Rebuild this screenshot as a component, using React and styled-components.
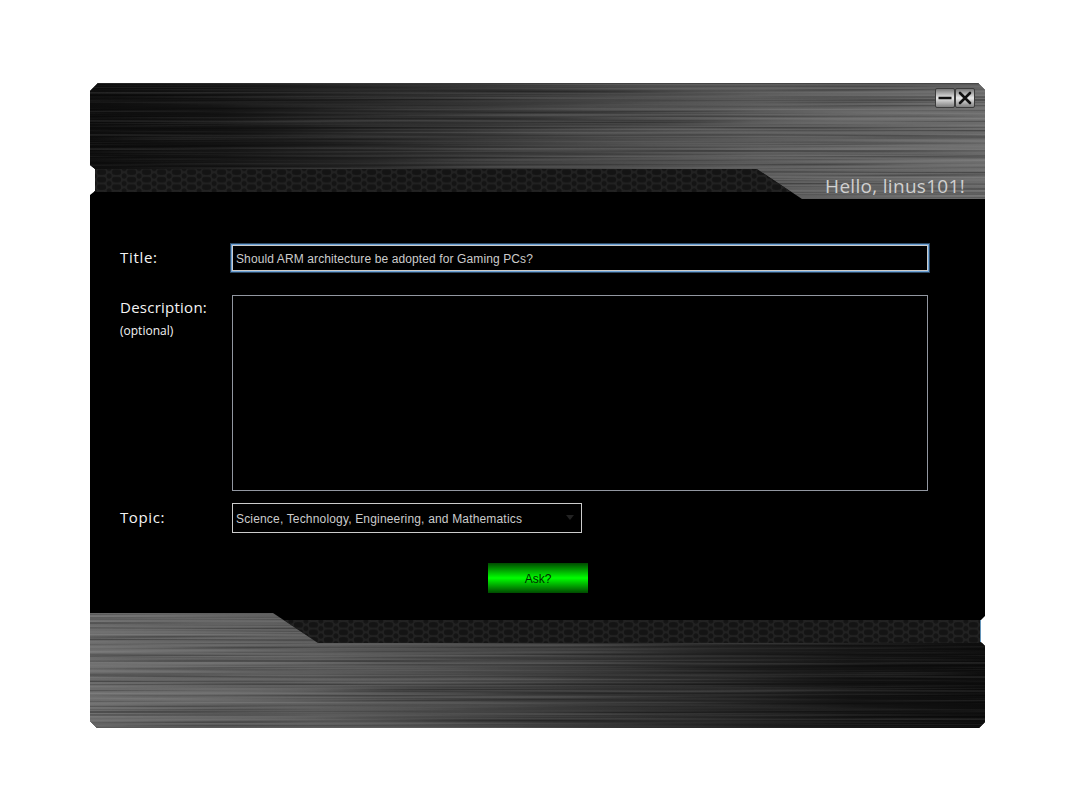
import React from "react";
import styled, { createGlobalStyle } from "styled-components";

const Global = createGlobalStyle`
  * { box-sizing: border-box; }
  body { margin: 0; background: #fff; }
`;

const Page = styled.main`
  width: 1080px;
  height: 810px;
  padding: 83px 95px 0 90px;
  overflow: hidden;
`;

const Window = styled.section`
  width: 895px;
  height: 645px;
  display: grid;
  grid-template-rows: 116px 414px 115px;
  background: #000;
  clip-path: polygon(8px 0, 888px 0, 895px 7px, 895px 533px, 891px 537px, 891px 559px, 895px 563px, 895px 639px, 889px 645px, 7px 645px, 0 638px, 0 112px, 5px 108px, 5px 86px, 0 82px, 0 8px);
`;

const Band = styled.div`
  display: grid;
  min-height: 0;
  & > * { grid-area: 1 / 1; }
`;

const Plate = styled.svg`
  display: block;
  width: 895px;
  height: 116px;
  transform: ${(p) => (p.$flip ? "rotate(180deg)" : "none")};
`;

const HeaderContent = styled.header`
  z-index: 1;
  display: flex;
  flex-direction: column;
  justify-content: space-between;
  align-items: flex-end;
  padding: 5px 10px 0 0;
`;

const Controls = styled.div`
  display: flex;
`;

const ControlButton = styled.button`
  width: 20px;
  height: 20px;
  padding: 0;
  border: 1px solid #3c3c3c;
  border-radius: 2px;
  background: linear-gradient(#777, #e8e8e8 50%, #808080);
  svg { display: block; }
`;

const Greeting = styled.div`
  margin-right: 10px;
  font: 19px/26px "Open Sans", sans-serif;
  letter-spacing: 0.3px;
  color: #d0d0d0;
`;

const Form = styled.form`
  display: grid;
  grid-template-columns: 111px 698px;
  grid-template-rows: 51px 208px 60px 30px;
  padding: 45px 0 0 30px;
`;

const Label = styled.label`
  padding-top: ${(p) => p.$top}px;
  font: 400 15px/20px "Open Sans", sans-serif;
  letter-spacing: ${(p) => p.$tracking}px;
  color: #f4f4f4;
`;

const Hint = styled.span`
  display: block;
  margin-top: 4px;
  font: 12px/20px "Open Sans", sans-serif;
  letter-spacing: 0;
`;

const fieldText = `
  font: 12px/16px "Liberation Sans", Arial, sans-serif;
  color: #ccc;
  background: #000;
  outline: none;
`;

const TitleInput = styled.input`
  ${fieldText}
  width: 696px;
  height: 26px;
  margin: 1px;
  padding: 2px 3px 0;
  border: 1px solid #ccc;
  box-shadow: 0 0 0 1px #6ba0d5, 0 0 0 2px #2d4964;
  letter-spacing: 0.11px;
`;

const Description = styled.textarea`
  ${fieldText}
  width: 696px;
  height: 196px;
  margin: 0 1px;
  border: 1px solid #9297a1;
  resize: none;
`;

const TopicSelect = styled.div`
  ${fieldText}
  width: 350px;
  height: 30px;
  margin: 0 1px;
  padding: 1px 7px 0 3px;
  border: 1px solid #ccc;
  display: flex;
  align-items: center;
  justify-content: space-between;
  letter-spacing: 0.17px;
  svg { margin-top: -1px; }
`;

const AskButton = styled.button`
  grid-column: 2;
  width: 100px;
  height: 30px;
  margin-left: 257px;
  padding: 2px 0 0;
  border: 0;
  background: linear-gradient(#004a00, #00ff00 50%, #004a00);
  font: 12px/16px "Liberation Sans", Arial, sans-serif;
  color: #002800;
`;

function BrushedPlate({ id, flip }) {
  const shape = "M0 0H895V116H712L667 86H0Z";
  return (
    <Plate viewBox="0 0 895 116" $flip={flip} aria-hidden="true">
      <defs>
        <linearGradient id={`${id}-metal`}>
          <stop offset="0" stopColor="#0d0d0d" />
          <stop offset=".15" stopColor="#151515" />
          <stop offset=".33" stopColor="#292929" />
          <stop offset=".55" stopColor="#434343" />
          <stop offset=".75" stopColor="#5b5b5b" />
          <stop offset="1" stopColor="#6a6a6a" />
        </linearGradient>
        <filter id={`${id}-light`} x="0" y="0" width="1" height="1" colorInterpolationFilters="sRGB">
          <feTurbulence type="fractalNoise" baseFrequency="0.003 0.43" numOctaves="2" seed="8" />
          <feColorMatrix values="0 0 0 0 1  0 0 0 0 1  0 0 0 0 1  .35 0 0 0 -.17" />
        </filter>
        <filter id={`${id}-dark`} x="0" y="0" width="1" height="1" colorInterpolationFilters="sRGB">
          <feTurbulence type="fractalNoise" baseFrequency="0.003 0.43" numOctaves="2" seed="8" />
          <feColorMatrix values="0 0 0 0 0  0 0 0 0 0  0 0 0 0 0  -1.1 0 0 0 .53" />
        </filter>
        <clipPath id={`${id}-clip`}><path d={shape} /></clipPath>
        <pattern id={`${id}-mesh`} width="15" height="7.5" patternUnits="userSpaceOnUse" x="1" y="85.5">
          <rect width="15" height="7.5" fill="#222" />
          <g fill="#141414" stroke="#0f0f0f" strokeWidth=".5">
            <rect x="6.3" y="1.2" width="8.6" height="4.9" rx="2" />
            <rect x="1" y="5.2" width="4.2" height="4.6" rx="1.8" />
            <rect x="1" y="-2.3" width="4.2" height="4.6" rx="1.8" />
          </g>
        </pattern>
      </defs>
      <path d="M4 86H667L701 109H4Z" fill={`url(#${id}-mesh)`} />
      <path d={shape} fill={`url(#${id}-metal)`} />
      <g clipPath={`url(#${id}-clip)`}>
        <rect width="895" height="116" filter={`url(#${id}-light)`} />
        <rect width="895" height="116" filter={`url(#${id}-dark)`} />
      </g>
      <path d="M0 .5H895" stroke="#333" opacity=".6" />
      {flip && <path d="M4.5 87V109" stroke="#6393b8" />}
    </Plate>
  );
}

export default function App() {
  return (
    <>
      <Global />
      <Page>
        <Window>
          <Band>
            <BrushedPlate id="top" />
            <HeaderContent>
              <Controls>
                <ControlButton type="button" aria-label="Minimize">
                  <svg width="18" height="18"><path d="M2.5 9H15.5" stroke="#111" strokeWidth="2.6" /></svg>
                </ControlButton>
                <ControlButton type="button" aria-label="Close">
                  <svg width="18" height="18"><path d="M4 4 14 14M14 4 4 14" stroke="#111" strokeWidth="2.6" strokeLinecap="round" /></svg>
                </ControlButton>
              </Controls>
              <Greeting>Hello, linus101!</Greeting>
            </HeaderContent>
          </Band>
          <Form>
            <Label $top={3} $tracking={0.7}>Title:</Label>
            <TitleInput defaultValue="Should ARM architecture be adopted for Gaming PCs?" />
            <Label $top={2} $tracking={0.25}>Description:<Hint>(optional)</Hint></Label>
            <Description />
            <Label $top={4} $tracking={0.6}>Topic:</Label>
            <TopicSelect>
              Science, Technology, Engineering, and Mathematics
              <svg width="8" height="6"><path d="M0 0H8L4 5Z" fill="#222" /></svg>
            </TopicSelect>
            <AskButton type="button">Ask?</AskButton>
          </Form>
          <Band>
            <BrushedPlate id="bottom" flip />
          </Band>
        </Window>
      </Page>
    </>
  );
}
